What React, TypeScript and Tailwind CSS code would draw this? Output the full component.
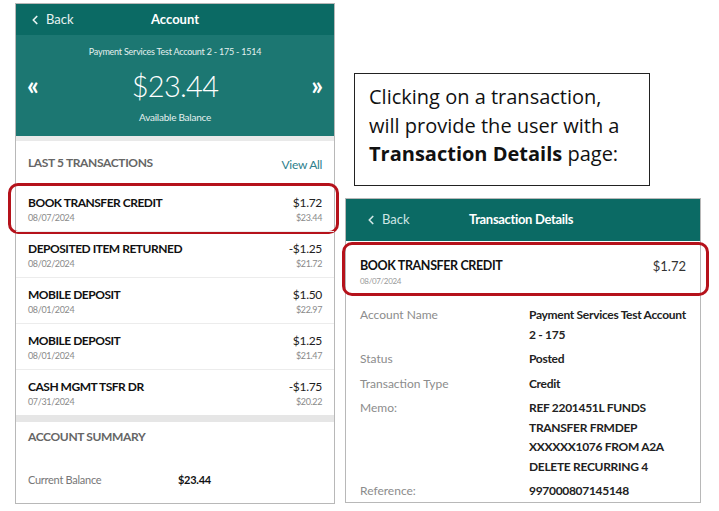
import { ChevronLeft } from 'lucide-react'

const txns = [
  { title: 'BOOK TRANSFER CREDIT', date: '08/07/2024', amount: '$1.72', bal: '$23.44', hl: true },
  { title: 'DEPOSITED ITEM RETURNED', date: '08/02/2024', amount: '-$1.25', bal: '$21.72' },
  { title: 'MOBILE DEPOSIT', date: '08/01/2024', amount: '$1.50', bal: '$22.97' },
  { title: 'MOBILE DEPOSIT', date: '08/01/2024', amount: '$1.25', bal: '$21.47' },
  { title: 'CASH MGMT TSFR DR', date: '07/31/2024', amount: '-$1.75', bal: '$20.22' },
]

const details = [
  { label: 'Account Name', value: ['Payment Services Test Account', '2 - 175'] },
  { label: 'Status', value: ['Posted'] },
  { label: 'Transaction Type', value: ['Credit'] },
  { label: 'Memo:', value: ['REF 2201451L FUNDS', 'TRANSFER FRMDEP', 'XXXXXX1076 FROM A2A', 'DELETE RECURRING 4'] },
  { label: 'Reference:', value: ['997000807145148'] },
]

function Highlight({ className }: { className: string }) {
  return <div className={`pointer-events-none absolute rounded-[10px] border-[3px] border-[#b5121b] ${className}`} />
}

function AccountScreen() {
  return (
    <div className="mt-[3px] ml-[15px] flex h-[501px] w-[320px] flex-col border border-[#b8b8b8] bg-white">
      <div className="relative flex h-[31px] items-center bg-[#0b6a64] px-3 text-white">
        <div className="flex items-center gap-1 text-[13px] text-[#e6f2f1]">
          <ChevronLeft className="h-3.5 w-3.5" strokeWidth={3} />
          Back
        </div>
        <div className="absolute left-0 right-0 text-center text-[13px] font-bold">Account</div>
      </div>
      <div className="flex h-[101px] flex-col items-center bg-[#1c7772] text-white">
        <div className="mt-[10px] text-[9px] tracking-tight text-[#e4f0ef]">Payment Services Test Account 2 - 175 - 1514</div>
        <div className="mt-[12px] flex w-full items-center justify-between px-[11px]">
          <span className="text-[26px] font-bold leading-none">«</span>
          <span className="text-[29px] font-light leading-none tracking-tight">$23.44</span>
          <span className="text-[26px] font-bold leading-none">»</span>
        </div>
        <div className="mt-[10px] text-[10px] tracking-tight text-[#e4f0ef]">Available Balance</div>
      </div>
      <div className="h-[5px] bg-[#e9e9e9]" />
      <div className="flex h-[44px] items-center justify-between px-3">
        <span className="text-[12px] font-bold tracking-[-0.03em] text-[#666]">LAST 5 TRANSACTIONS</span>
        <span className="mt-1 text-[12px] tracking-tight text-[#2e7f8c]">View All</span>
      </div>
      {txns.map((t, i) => (
        <div key={i} className="relative flex h-[46px] items-center justify-between border-t border-[#ececec] px-3">
          {t.hl && <Highlight className="-top-[3px] -bottom-[3px] -left-[8px] -right-[5px]" />}
          <div className="flex flex-col pt-[2px]">
            <span className="text-[12px] font-bold leading-[16px] tracking-[-0.04em] text-[#111]">{t.title}</span>
            <span className="text-[9px] leading-[14px] tracking-[-0.04em] text-[#8a8a8a]">{t.date}</span>
          </div>
          <div className="flex flex-col items-end pt-[2px]">
            <span className="text-[12px] leading-[16px] tracking-tight text-[#222]">{t.amount}</span>
            <span className="text-[9px] leading-[14px] tracking-[-0.04em] text-[#8a8a8a]">{t.bal}</span>
          </div>
        </div>
      ))}
      <div className="h-[7px] bg-[#e6e6e6]" />
      <div className="flex h-[30px] items-center px-3 text-[12px] font-bold tracking-[-0.03em] text-[#666]">ACCOUNT SUMMARY</div>
      <div className="mt-[20px] flex items-center px-3 text-[11px] tracking-tight">
        <span className="w-[150px] text-[#777]">Current Balance</span>
        <span className="font-bold text-[#111]">$23.44</span>
      </div>
    </div>
  )
}

function DetailScreen() {
  return (
    <div className="ml-[2px] flex h-[305px] w-[356px] flex-col border border-[#b8b8b8] bg-white">
      <div className="flex h-[42px] items-center bg-[#0b6a64] pl-[18px] text-[13px]">
        <div className="flex w-[105px] items-center gap-1 text-[#cfe6e4]">
          <ChevronLeft className="h-3.5 w-3.5" strokeWidth={3} />
          Back
        </div>
        <span className="font-bold tracking-tight text-white">Transaction Details</span>
      </div>
      <div className="relative flex h-[54px] items-start justify-between px-[14px] pt-[17px]">
        <Highlight className="top-[1px] -bottom-[1px] -left-[4px] -right-[9px]" />
        <div className="flex flex-col">
          <span className="text-[12.5px] font-bold leading-[16px] tracking-[-0.03em] text-[#111]">BOOK TRANSFER CREDIT</span>
          <span className="text-[8px] leading-[15px] tracking-[-0.04em] text-[#999]">08/07/2024</span>
        </div>
        <span className="text-[13px] leading-[16px] text-[#333]">$1.72</span>
      </div>
      <div className="flex flex-col gap-[5px] px-[14px] pt-[10px] text-[12px]">
        {details.map((d) => (
          <div key={d.label} className="flex">
            <span className="w-[169px] leading-[19px] text-[#8c8c8c]">{d.label}</span>
            <div className="flex flex-col font-bold tracking-tight text-[#222]">
              {d.value.map((v) => (
                <span key={v} className="leading-[19.5px]">{v}</span>
              ))}
            </div>
          </div>
        ))}
      </div>
    </div>
  )
}

export default function App() {
  return (
    <div className="flex h-[511px] w-[719px] overflow-hidden bg-white" style={{ fontFamily: 'Lato, "Open Sans", sans-serif' }}>
      <AccountScreen />
      <div className="ml-[8px] flex flex-col">
        <div className="mt-[73px] ml-[11px] flex h-[113px] w-[296px] flex-col justify-center border border-[#222] px-[14px] pb-[7px] text-[20px] leading-[28.5px] text-[#111]" style={{ fontFamily: '"Open Sans", sans-serif' }}>
          <div className="whitespace-nowrap">Clicking on a transaction,</div>
          <div className="whitespace-nowrap">will provide the user with a</div>
          <div className="whitespace-nowrap">
            <b>Transaction Details</b> page:
          </div>
        </div>
        <div className="mt-[12px]">
          <DetailScreen />
        </div>
      </div>
    </div>
  )
}
